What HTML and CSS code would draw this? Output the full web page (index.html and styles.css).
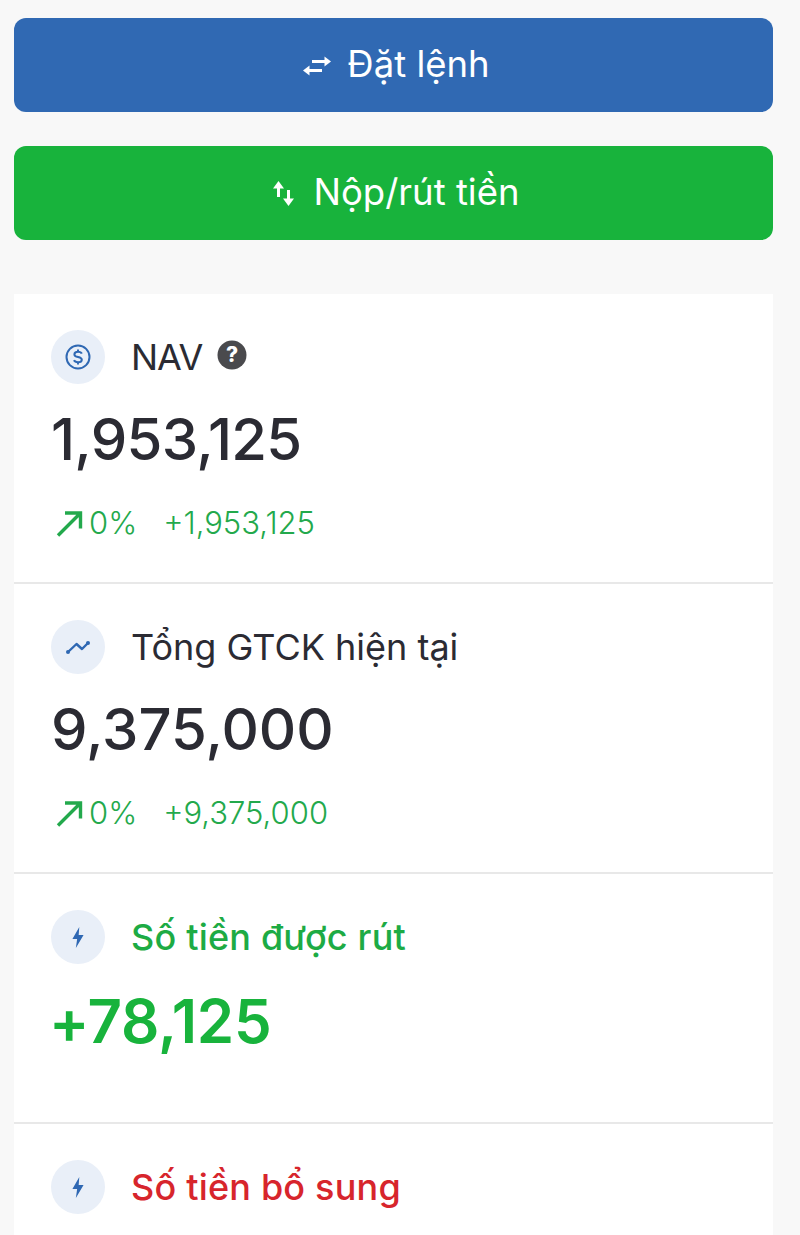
FILE: index.html
```html
<!DOCTYPE html>
<html lang="en">
<head>
    <meta charset="UTF-8">
    <title>Tài sản</title>
    <link rel="stylesheet" href="styles.css">
</head>
<body>

<div class="container">
    <button class="action action-blue">
        <svg width="28" height="21" viewBox="0 0 28 21" fill="none" stroke="#fff" stroke-width="3">
            <path d="M9 6.5H23"/>
            <path d="M21.5 1.5L28 6.5L21.5 11.5z" fill="#fff" stroke="none"/>
            <path d="M19 15.5H5"/>
            <path d="M6.5 10.5L0 15.5L6.5 20.5z" fill="#fff" stroke="none"/>
        </svg>
        <span class="action-text">Đặt lệnh</span>
    </button>

    <button class="action action-green">
        <svg width="24" height="25" viewBox="0 0 24 25" fill="none" stroke="#fff" stroke-width="3">
            <path d="M5.5 6V16"/>
            <path d="M0 7.5L5.5 0L11 7.5z" fill="#fff" stroke="none"/>
            <path d="M15.5 9V19"/>
            <path d="M10 17.5L15.5 25L21 17.5z" fill="#fff" stroke="none"/>
        </svg>
        <span class="action-text">Nộp/rút tiền</span>
    </button>

    <div class="card">
        <div class="stat">
            <div class="stat-head">
                <span class="stat-icon">
                    <svg width="26" height="26" viewBox="0 0 26 26" fill="none" stroke="#2f68b3" stroke-width="2">
                        <circle cx="13" cy="13" r="11.5"/>
                        <path d="M16.8 9.6C16.2 8.2 14.8 7.7 13 7.7C10.8 7.7 9.4 8.8 9.4 10.4C9.4 14 16.8 12 16.8 15.7C16.8 17.3 15.2 18.3 13 18.3C11 18.3 9.6 17.6 9 16.2M13 5.6V7.7M13 18.3V20.4"/>
                    </svg>
                </span>
                <span class="stat-label label-nav">NAV</span>
                <svg class="help" width="30" height="30" viewBox="0 0 30 30">
                    <circle cx="15" cy="15" r="14.5" fill="#4a4a4d"/>
                    <text x="15" y="22" text-anchor="middle" class="help-mark">?</text>
                </svg>
            </div>
            <div class="stat-value value-tight">1,953,125</div>
            <div class="stat-delta">
                <span class="delta-pct">
                    <svg width="27" height="27" viewBox="0 0 27 27" fill="none" stroke="#23a94c" stroke-width="3.4">
                        <path d="M2 25.5L24.5 3M9 3H24.5V18.5"/>
                    </svg>
                    0%
                </span>
                <span>+1,953,125</span>
            </div>
        </div>

        <div class="stat">
            <div class="stat-head">
                <span class="stat-icon">
                    <svg width="24" height="13" viewBox="0 0 24 13" fill="none" stroke="#2f68b3" stroke-width="2.4" stroke-linejoin="round">
                        <path d="M2 11L10.5 3L16 8L22 2"/>
                        <circle cx="2" cy="11" r="2" fill="#2f68b3" stroke="none"/>
                        <circle cx="22" cy="2" r="2" fill="#2f68b3" stroke="none"/>
                    </svg>
                </span>
                <span class="stat-label">Tổng GTCK hiện tại</span>
            </div>
            <div class="stat-value">9,375,000</div>
            <div class="stat-delta">
                <span class="delta-pct">
                    <svg width="27" height="27" viewBox="0 0 27 27" fill="none" stroke="#23a94c" stroke-width="3.4">
                        <path d="M2 25.5L24.5 3M9 3H24.5V18.5"/>
                    </svg>
                    0%
                </span>
                <span>+9,375,000</span>
            </div>
        </div>

        <div class="stat stat-short">
            <div class="stat-head">
                <span class="stat-icon">
                    <svg width="12" height="21" viewBox="0 0 14 22" fill="#2f68b3" preserveAspectRatio="none">
                        <path d="M8.5 0L0.5 12.5H6L4.5 22L13.5 8.5H7.8z"/>
                    </svg>
                </span>
                <span class="stat-label label-strong text-green">Số tiền được rút</span>
            </div>
            <div class="stat-value value-green">+78,125</div>
        </div>

        <div class="stat stat-last">
            <div class="stat-head">
                <span class="stat-icon">
                    <svg width="12" height="21" viewBox="0 0 14 22" fill="#2f68b3" preserveAspectRatio="none">
                        <path d="M8.5 0L0.5 12.5H6L4.5 22L13.5 8.5H7.8z"/>
                    </svg>
                </span>
                <span class="stat-label label-strong text-red">Số tiền bổ sung</span>
            </div>
        </div>
    </div>
</div>

</body>
</html>
```

FILE: styles.css
```css
html, body {
    height: 100%;
}
body {
    margin: 0;
    background: #f8f8f8;
    font-family: Inter, "Noto Sans", sans-serif;
    color: #2b2b33;
    overflow: hidden;
}
.container {
    padding: 18px 27px 0 14px;
}
.action {
    display: flex;
    align-items: center;
    justify-content: center;
    gap: 16px;
    width: 100%;
    height: 94px;
    margin-bottom: 34px;
    padding: 0 0 0 6px;
    border: none;
    border-radius: 12px;
    color: white;
    font-family: inherit;
    font-size: 36.5px;
}
.action-text {
    margin-bottom: 2px;
}
.action-blue {
    background: #3069b3;
}
.action-green {
    background: #18b33c;
    margin-bottom: 54px;
}
.card {
    background: white;
}
.stat {
    height: 290px;
    padding: 36px 37px 0;
    box-sizing: border-box;
    border-bottom: 2px solid #e8e8e8;
}
.stat-short {
    height: 250px;
}
.stat-last {
    height: 111px;
    border-bottom: none;
}
.stat-head {
    display: flex;
    align-items: center;
    height: 54px;
}
.stat-icon {
    display: flex;
    align-items: center;
    justify-content: center;
    width: 54px;
    height: 54px;
    margin-right: 26px;
    border-radius: 50%;
    background: #e9eff8;
}
.stat-label {
    font-size: 36px;
}
.label-nav {
    letter-spacing: -1px;
}
.label-strong {
    font-weight: 500;
    letter-spacing: 0.2px;
}
.help {
    margin-left: 15px;
    margin-bottom: 4px;
}
.help-mark {
    fill: white;
    font-family: Inter, sans-serif;
    font-size: 21px;
    font-weight: 800;
}
.stat-value {
    margin-top: 20px;
    font-size: 58px;
    line-height: 70px;
    font-weight: 550;
}
.value-tight {
    letter-spacing: -0.7px;
}
.stat-delta {
    display: flex;
    align-items: center;
    gap: 26px;
    margin-top: 31px;
    color: #23a94c;
    font-size: 31px;
    line-height: 36px;
    font-weight: 300;
}
.delta-pct {
    display: flex;
    align-items: center;
    gap: 6px;
    margin-left: 5px;
}
.text-green {
    color: #1dab44;
}
.text-red {
    color: #d7252c;
}
.value-green {
    margin-top: 22px;
    margin-left: -2px;
    color: #18b33c;
    font-size: 60px;
    font-weight: 600;
    letter-spacing: -0.2px;
}
```
